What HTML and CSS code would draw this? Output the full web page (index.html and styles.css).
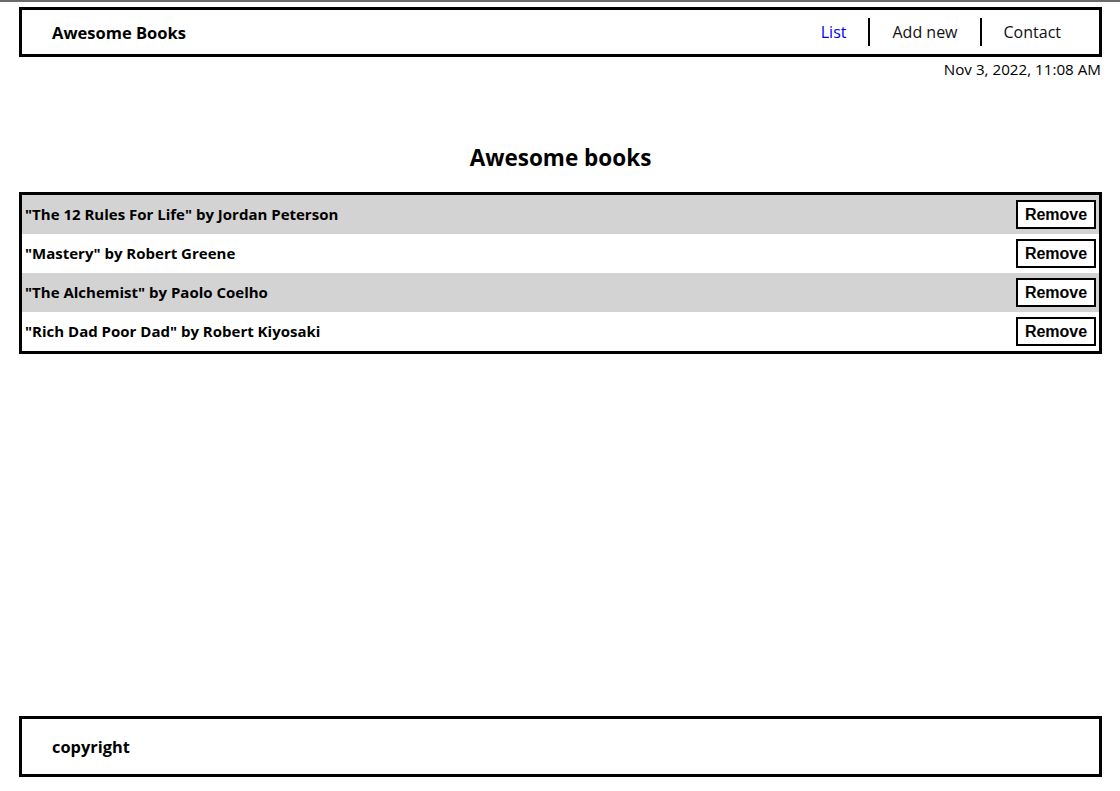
FILE: index.html
```html
<!DOCTYPE html>
<html lang="en">
<head>
<meta charset="utf-8">
<title>Awesome Books</title>
<link rel="stylesheet" href="styles.css">
</head>
<body>
<div class="page">
  <header class="topbar">
    <h1 class="brand">Awesome Books</h1>
    <ul class="nav">
      <li class="nav-item active">List</li>
      <li class="nav-item">Add new</li>
      <li class="nav-item">Contact</li>
    </ul>
  </header>
  <p class="date">Nov 3, 2022, 11:08 AM</p>
  <main class="content">
    <h2 class="title">Awesome books</h2>
    <ul class="books">
      <li class="book"><span class="book-name">"The 12 Rules For Life" by Jordan Peterson</span><button class="remove">Remove</button></li>
      <li class="book"><span class="book-name">"Mastery" by Robert Greene</span><button class="remove">Remove</button></li>
      <li class="book"><span class="book-name">"The Alchemist" by Paolo Coelho</span><button class="remove">Remove</button></li>
      <li class="book"><span class="book-name">"Rich Dad Poor Dad" by Robert Kiyosaki</span><button class="remove">Remove</button></li>
    </ul>
  </main>
  <footer class="footer">
    <p class="copy">copyright</p>
  </footer>
</div>
</body>
</html>
```
FILE: styles.css
```css
* { box-sizing: border-box; }
html, body { margin: 0; padding: 0; }
body {
  font-family: "Open Sans", "Noto Sans", sans-serif;
  color: #000;
  background: #fff;
  border-top: 2px solid #6b6b6b;
}
.page {
  display: flex;
  flex-direction: column;
  min-height: calc(100vh - 2px);
  padding: 5px 18px 14px 19px;
}
.topbar {
  display: flex;
  align-items: center;
  justify-content: space-between;
  height: 50px;
  border: 3px solid #000;
  padding: 0 16px 0 30px;
}
.brand {
  margin: 0;
  font-size: 16.5px;
  font-weight: 700;
}
.nav {
  display: flex;
  align-items: center;
  list-style: none;
  margin: 0;
  padding: 0;
}
.nav-item {
  font-size: 16px;
  font-weight: 500;
  line-height: 28px;
  height: 28px;
  padding: 0 22px 0 23px;
  color: #111;
}
.nav-item + .nav-item { border-left: 2px solid #000; padding-left: 22px; }
.nav-item.active { color: #0000ff; }
.date {
  margin: 2px 1px 0 0;
  text-align: right;
  font-size: 15.2px;
  font-weight: 500;
  line-height: 20px;
}
.content { flex: 0 0 auto; }
.title {
  margin: 64px 0 19px;
  text-align: center;
  font-size: 22.5px;
  line-height: 30px;
  font-weight: 700;
}
.books {
  list-style: none;
  margin: 0;
  padding: 0;
  border: 3px solid #000;
}
.book {
  display: flex;
  align-items: center;
  justify-content: space-between;
  height: 39px;
  padding: 0 3px;
  background: #fff;
}
.book:nth-child(odd) { background: #d3d3d3; }
.book-name {
  font-size: 15px;
  font-weight: 700;
  margin-top: -1px;
}
.remove {
  width: 80px;
  height: 29px;
  border: 2px solid #000;
  background: #fff;
  font-family: "Liberation Sans", Arial, sans-serif;
  font-size: 16px;
  font-weight: 700;
  color: #000;
  padding: 0;
}
.footer {
  margin-top: auto;
  height: 61px;
  border: 3px solid #000;
  display: flex;
  align-items: center;
  padding: 0 30px;
}
.copy {
  margin: 0;
  font-size: 16.4px;
  font-weight: 700;
}
```
